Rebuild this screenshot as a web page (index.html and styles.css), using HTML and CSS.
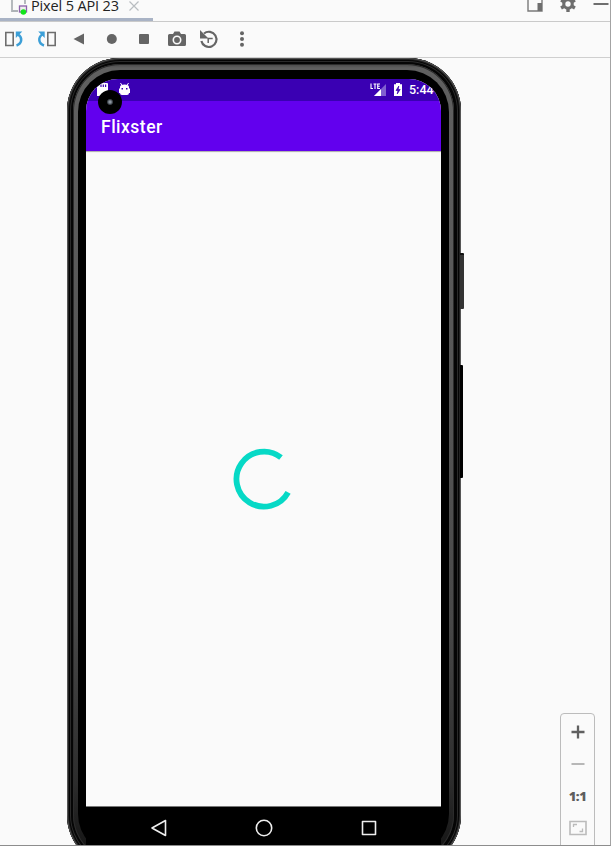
FILE: index.html
```html
<!DOCTYPE html>
<html lang="en">
<head>
<meta charset="utf-8">
<title>Emulator</title>
<link rel="stylesheet" href="styles.css">
</head>
<body>
<div class="window">
  <header class="tabs">
    <div class="tab">
      <svg class="device" width="18" height="16" viewBox="0 0 18 16"><path d="M1 0v11h6M14 0v4" fill="none" stroke="#aeb3b7" stroke-width="1.8"/><rect x="8.5" y="6" width="7" height="6" fill="#eee" stroke="#8c62ab" stroke-width="1.3"/><circle cx="12.4" cy="12" r="2.8" fill="#12e51b"/></svg>
      <span class="tab-name">Pixel 5 API 23</span>
      <svg class="close" width="10" height="10" viewBox="0 0 10 10"><path d="M.5.5l9 9M9.500.5l-9 9" stroke="#b9bdc1" stroke-width="1.2"/></svg>
    </div>
    <div class="actions">
      <svg width="16" height="13" viewBox="0 0 16 13"><path d="M1 0v11h14V0" fill="none" stroke="#7a7a7a" stroke-width="1.4"/><path d="M10.500 3H15v8h-4.500z" fill="#6e6e6e"/></svg>
      <svg width="16" height="13" viewBox="0 0 16 13"><g fill="#6e6e6e"><path d="M6.300-4h3.400v16H6.300z"/><path d="M6.300-4h3.400v16H6.300z" transform="rotate(60 8 4)"/><path d="M6.300-4h3.400v16H6.300z" transform="rotate(120 8 4)"/><circle cx="8" cy="4" r="5.800"/></g><circle cx="8" cy="4" r="2.700" fill="#fafafa"/></svg>
      <svg width="16" height="13" viewBox="0 0 16 13"><path d="M.5 4h15" stroke="#6e6e6e" stroke-width="2"/></svg>
    </div>
  </header>
  <nav class="toolbar">
    <svg width="243" height="20" viewBox="4 29 243 20">
      <g fill="none" stroke="#6e6e6e" stroke-width="1.600"><path d="M5.800 32.500h7.400v13H5.800zM47.800 32.500h7.400v13h-7.400z"/></g>
      <g fill="none" stroke="#3c9fd7" stroke-width="2.500"><path d="M16.500 45.500c6-2 6-8.500 1.500-11M44 45.500c-6-2-6-8.500-1.500-11"/></g>
      <path d="M15.800 31.500h6.500l-6.500 6.500zM44.700 31.500h-6.500l6.500 6.500z" fill="#3c9fd7"/>
      <g fill="#656565"><path d="M84 33.500v11L73.500 39z"/><circle cx="111.800" cy="39" r="5"/><rect x="139" y="34" width="10" height="10" rx="1"/>
      <path d="M169.500 34h3.500l1.500-2.500h5L181 34h3.500q1.500 0 1.500 1.500v9q0 1.500-1.500 1.500h-15q-1.500 0-1.500-1.500v-9q0-1.500 1.500-1.500z"/><circle cx="242" cy="33.200" r="2"/><circle cx="242" cy="39" r="2"/><circle cx="242" cy="44.800" r="2"/><path d="M200 30v8.500h8.500z"/></g>
      <circle cx="177" cy="40" r="3.700" fill="none" stroke="#fafafa" stroke-width="1.600"/>
      <path d="M204 33.500a7.600 7.600 0 1 1-2.600 7.500" fill="none" stroke="#656565" stroke-width="2.200"/><path d="M208.200 43v-4.500h4.500" fill="none" stroke="#656565" stroke-width="1.500"/>
    </svg>
  </nav>
  <main class="stage">
    <div class="phone">
      <div class="shine"><div class="bezel"><div class="screen">
        <div class="status">
          <svg class="notices" width="32" height="22" viewBox="0 0 32 22"><path d="M15 4h6q1 0 1 1v12H11V8z" fill="#fff"/><path d="M15 5.500v2.500M17.300 5.500v2.500M19.600 5.500v2.500" stroke="#3a00b3" stroke-width="1.200"/></svg>
          <svg class="robot" width="13" height="22" viewBox="0 0 13 22"><path d="M2.500 4L4 6.500M10.500 4L9 6.500" stroke="#fff"/><path d="M2 8q0-2.500 4.500-2.500T11 8v1.500h1V14h-1q0 2-2 2H4q-2 0-2-2H1V9.500h1z" fill="#fff"/><path d="M3.500 9h1.500v1.500H3.500zM8 9h1.500v1.500H8z" fill="#3a00b3"/></svg>
          <svg class="signal" width="17" height="22" viewBox="0 0 17 22"><path d="M16 5v12H4z" fill="#8060d0"/><path d="M11 10v7H4z" fill="#fff"/><path d="M1 4.500v5h2M3.500 5h3M5 5v5M10 5H7.700v4.500H10M7.700 7.200h2" fill="none" stroke="#fff" stroke-width="1.100"/></svg>
          <svg class="battery" width="10" height="22" viewBox="0 0 10 22"><path d="M3 4h4v1.300h2V17H1V5.300h2z" fill="#fff"/><path d="M5.800 7L3 11.500h2L4.200 15 7.200 10.500h-2z" fill="#3a00b3" stroke="#3a00b3" stroke-width=".7"/></svg>
          <span class="clock">5:44</span>
        </div>
        <div class="appbar">Flixster</div>
        <div class="content"><svg width="62" height="62" viewBox="0 0 62 62"><path d="M48 9.500A27.500 27.500 0 1 0 55.100 44.300" fill="none" stroke="#06d9c6" stroke-width="5.800"/></svg></div>
        <div class="navigation">
          <svg width="18" height="18" viewBox="0 0 18 18"><path d="M15.500 1.500v15L2 9z"/></svg>
          <svg width="18" height="18" viewBox="0 0 18 18"><circle cx="9" cy="9" r="7.700"/></svg>
          <svg width="18" height="18" viewBox="0 0 18 18"><path d="M2.500 2.500h13v13h-13z"/></svg>
        </div>
      </div></div></div>
      <div class="camera"></div>
      <div class="key power"></div>
      <div class="key volume"></div>
    </div>
    <aside class="zoom">
      <svg width="18" height="18" viewBox="0 0 18 18"><path d="M2.500 9h13M9 2.500v13" stroke="#606060" stroke-width="2.300"/></svg>
      <svg width="18" height="18" viewBox="0 0 18 18"><path d="M2.500 9h13" stroke="#b7b7b7" stroke-width="2"/></svg>
      <span class="ratio">1:1</span>
      <svg width="18" height="18" viewBox="0 0 18 18"><path d="M1 2.500h16v13H1z" fill="none" stroke="#bbb" stroke-width="1.600"/><path d="M4.500 8V5.500H8M10.500 12.500H13.500V9.500" fill="none" stroke="#bbb" stroke-width="1.300"/></svg>
    </aside>
  </main>
</div>
</body>
</html>
```
FILE: styles.css
```css
* { box-sizing: border-box; }
body { margin: 0; background: #fafafa; overflow: hidden; }
svg { display: block; flex: none; }
.window {
  width: 611px;
  height: 846px;
  display: flex;
  flex-direction: column;
  border-right: 1px solid #a3a3a3;
  border-bottom: 1px solid #8d8d8d;
  font-family: "Open Sans", sans-serif;
}
.tabs {
  height: 22px;
  flex: none;
  display: flex;
  justify-content: space-between;
  border-bottom: 1px solid #cacaca;
}
.tab {
  width: 153px;
  height: 21px;
  display: flex;
  padding-left: 11px;
  border-bottom: 3px solid #a9b3c5;
}
.tab-name {
  width: 90px;
  margin-left: 2px;
  margin-top: -4px;
  font-size: 14.5px;
  line-height: 20px;
  letter-spacing: -0.15px;
  white-space: nowrap;
  color: #222;
}
.close { margin: 1px 0 0 8px; }
.actions { display: flex; gap: 17px; padding-right: 1px; }
.toolbar {
  height: 36px;
  flex: none;
  padding: 7px 4px;
  border-bottom: 1px solid #cfcfcf;
}
.stage {
  flex: 1;
  min-height: 0;
  overflow: hidden;
  display: flex;
  justify-content: space-between;
  align-items: flex-start;
  padding: 0 15px 0 67px;
}
.phone {
  position: relative;
  width: 394px;
  height: 810px;
  flex: none;
  padding: 6px 7px 6px 6px;
  border-radius: 53px;
  background: #050505;
  box-shadow: inset 0 0 0 1px #555, inset 0 0 0 2px #222, inset 0 0 0 3px #050505, inset 0 0 0 4px #2a2a2a;
}
.shine {
  height: 798px;
  padding: 6px 5px;
  border-radius: 47px;
  background: linear-gradient(#484848, #606060 4px, #555 45%, #484848 70%, #2d2d2d 90%, #111);
  box-shadow: inset 0 0 0 1px #2c2c2c;
}
.bezel {
  height: 786px;
  padding: 9px 8px;
  border-radius: 42px;
  background: #000;
}
.screen {
  width: 355px;
  height: 766px;
  overflow: hidden;
  border-radius: 32px 32px 0 0;
  background: #fafafa;
}
.status {
  height: 22px;
  display: flex;
  background: #3a00b3;
  color: #fff;
}
.signal { margin-left: 239px; }
.battery { margin-left: 6px; }
.clock {
  margin-left: 6px;
  font: 500 12.5px/22px Roboto, sans-serif;
}
.appbar {
  height: 50px;
  padding-left: 15px;
  background: #6200ee;
  color: #fff;
  font: 500 17.5px/53px Roboto, sans-serif;
  letter-spacing: 0.5px;
}
.content {
  height: 655px;
  display: flex;
  align-items: center;
  justify-content: center;
  padding-top: 1px;
  box-shadow: inset 0 2px 1px -1px #aaa;
}
.navigation {
  height: 39px;
  display: flex;
  justify-content: center;
  gap: 87px;
  padding-top: 12px;
  border-top: 1px solid #777;
  background: #000;
}
.navigation path, .navigation circle {
  fill: none;
  stroke: #eee;
  stroke-width: 1.6;
  stroke-linejoin: round;
}
.camera {
  position: absolute;
  left: 31px;
  top: 32px;
  width: 24px;
  height: 24px;
  border-radius: 50%;
  background: radial-gradient(circle, #8c949f 0 1px, #3c424a 2.5px, #000 3.5px);
}
.key { position: absolute; left: 393px; width: 4px; border-radius: 0 1px 1px 0; }
.power { top: 195px; height: 56px; background: #333; border-top: 2px solid #111; }
.volume { top: 307px; height: 113px; width: 3px; background: #000; }
.zoom {
  width: 35px;
  height: 150px;
  margin-top: 655px;
  display: flex;
  flex-direction: column;
  align-items: center;
  gap: 14px;
  padding-top: 9px;
  border: 1px solid #bcbcbc;
  border-radius: 4px;
}
.ratio {
  font: 800 13px/18px "Open Sans", sans-serif;
  letter-spacing: -0.5px;
  color: #5e5e5e;
}
```
